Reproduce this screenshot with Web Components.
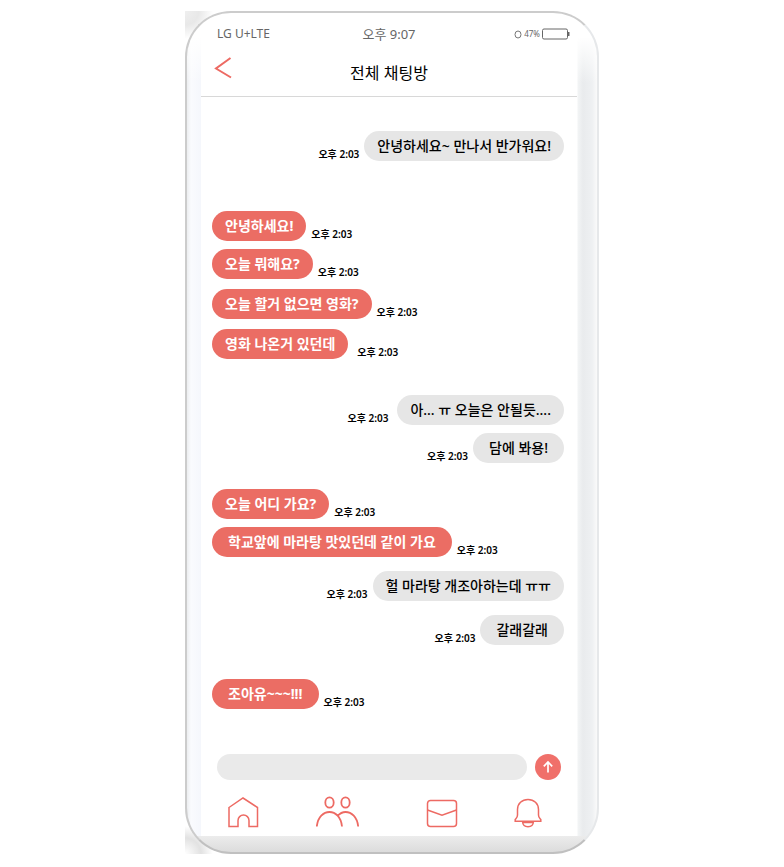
<!DOCTYPE html>
<html lang="ko">
<head>
<meta charset="utf-8">
<meta name="viewport" content="width=device-width, initial-scale=1">
<title>전체 채팅방</title>
<style>
body { margin: 0; padding: 11px 0 13px; background: #fff; color: #000; font-family: "Noto Sans", "Noto Sans CJK KR", sans-serif; }
</style>
</head>
<body>
<phone-frame>
  <status-bar slot="top" carrier="LG U+LTE" time="오후 9:07" battery="47%"></status-bar>
  <room-header slot="top">전체 채팅방</room-header>
  <message-list>
    <chat-message side="sent" time="오후 2:03">안녕하세요~ 만나서 반가워요!</chat-message>
    <chat-message space="break" time="오후 2:03">안녕하세요!</chat-message>
    <chat-message time="오후 2:03">오늘 뭐해요?</chat-message>
    <chat-message space="line" time="오후 2:03">오늘 할거 없으면 영화?</chat-message>
    <chat-message space="line" apart time="오후 2:03">영화 나온거 있던데</chat-message>
    <chat-message side="sent" space="turn" apart time="오후 2:03">아... ㅠ 오늘은 안될듯....</chat-message>
    <chat-message side="sent" roomy time="오후 2:03">담에 봐용!</chat-message>
    <chat-message space="reply" time="오후 2:03">오늘 어디 가요?</chat-message>
    <chat-message roomy time="오후 2:03">학교앞에 마라탕 맛있던데 같이 가요</chat-message>
    <chat-message side="sent" space="near" time="오후 2:03">헐 마라탕 개조아하는데 ㅠㅠ</chat-message>
    <chat-message side="sent" space="near" roomy time="오후 2:03">갈래갈래</chat-message>
    <chat-message space="last" roomy time="오후 2:03">조아유~~~!!!</chat-message>
  </message-list>
  <message-composer slot="bottom"></message-composer>
  <tab-bar slot="bottom"></tab-bar>
</phone-frame>

<script>
const define = (name, markup, setup) => {
  const template = document.createElement('template');
  template.innerHTML = markup;
  customElements.define(name, class extends HTMLElement {
    constructor() {
      super();
      this.attachShadow({ mode: 'open' }).append(template.content.cloneNode(true));
    }
    connectedCallback() { if (setup) setup(this, this.shadowRoot); }
  });
};

define('phone-frame', `
<style>
:host { display: block; box-sizing: border-box; width: 100%; max-width: 414px; margin: 0 auto;
  background:
    radial-gradient(circle at 0 0, #efefef 0, #e8e8e8 14px, #fff 28px) 0 0 / 40px 40px no-repeat,
    radial-gradient(circle at 0 100%, #fff 0, #e2e2e2 16px, #fff 28px) 0 100% / 40px 40px no-repeat,
    #fff; }
.case { box-sizing: border-box; padding: 0 20px 16px 14px; border: 2px solid #ccc; border-right-color: #e6e8ea; border-bottom-color: #c0c0c0; border-radius: 46px;
  background:
    linear-gradient(#fff 0, #fff 24px, transparent) 0 0 / 100% 70px no-repeat,
    linear-gradient(#ececec, #dcdcdc) 0 100% / 100% 16px no-repeat,
    linear-gradient(90deg, #eceef0 0, #fafbfe 4px, #f5f7fc 14px, #fff 14px, #fff calc(100% - 20px), #f2f4f5 calc(100% - 19px), #e9ebed calc(100% - 14px), #eef0f2 calc(100% - 5px), #fafafa 100%); }
.screen { display: flex; flex-direction: column; }
</style>
<div class="case"><div class="screen"><slot name="top"></slot><slot></slot><slot name="bottom"></slot></div></div>`);

define('status-bar', `
<style>
:host { display: grid; grid-template-columns: 1fr auto 1fr; align-items: center; height: 42px; padding: 0 7px; color: #666; font-size: 12px; line-height: 18px; }
.carrier { padding-left: 9px; }
.time { font-size: 13px; }
.power { display: flex; align-items: center; justify-content: flex-end; gap: 2px; font-size: 8px; }
svg { display: block; }
</style>
<span class="carrier"></span><span class="time"></span>
<span class="power">
<svg width="8" height="9" viewBox="0 0 8 9" fill="none" stroke="#777"><ellipse cx="4" cy="4.5" rx="3" ry="3.5"/></svg>
<span class="level"></span>
<svg width="28" height="12" viewBox="0 0 28 12"><rect x=".5" y="1" width="25" height="10" rx="1.5" fill="none" stroke="#666"/><path d="M26 4h1.5v4H26z" fill="#666"/></svg>
</span>`, (el, root) => {
  root.querySelector('.carrier').textContent = el.getAttribute('carrier');
  root.querySelector('.time').textContent = el.getAttribute('time');
  root.querySelector('.level').textContent = el.getAttribute('battery');
});

define('room-header', `
<style>
:host { display: grid; grid-template-columns: 1fr auto 1fr; height: 41px; border-bottom: 1px solid #d8d8d8; }
button { justify-self: start; align-self: start; margin: 0 0 0 13px; padding: 0; border: 0; background: none; cursor: pointer; }
svg { display: block; }
h1 { margin: 0; padding-top: 6px; font-size: 16px; line-height: 24px; font-weight: 400; }
</style>
<button type="button" aria-label="뒤로"><svg width="20" height="24" viewBox="0 0 20 24" fill="none" stroke="#ed6a63" stroke-width="2"><path d="M16.500 3 2 13.500 17 22.500"/></svg></button>
<h1><slot></slot></h1>`);

define('message-list', `
<style>
:host { display: flex; flex-direction: column; padding: 34px 13px 45px 11px; }
</style>
<slot></slot>`);

define('chat-message', `
<style>
:host { display: flex; align-items: flex-end; gap: 5px; margin-top: 8px; }
:host(:first-child) { margin-top: 0; }
:host([space="line"]) { margin-top: 10px; }
:host([space="near"]) { margin-top: 14px; }
:host([space="reply"]) { margin-top: 26px; }
:host([space="last"]) { margin-top: 34px; }
:host([space="turn"]) { margin-top: 36px; }
:host([space="break"]) { margin-top: 50px; }
:host([apart]) { gap: 9px; }
:host([side="sent"]) { flex-direction: row-reverse; }
p { margin: 0; padding: 4px 13px; border-radius: 15px; background: #eb6d64; color: #fff; font-size: 14px; line-height: 22px; font-weight: 700; }
:host([side="sent"]) p { background: #e6e6e6; color: #000; font-weight: 500; }
:host([roomy]) p { padding-inline: 16px; }
time { flex: none; font-size: 10px; line-height: 14px; font-weight: 600; }
</style>
<p><slot></slot></p><time></time>`, (el, root) => {
  root.querySelector('time').textContent = el.getAttribute('time');
});

define('message-composer', `
<style>
:host { display: flex; align-items: center; gap: 8px; padding: 0 16px; }
input { flex: 1; min-width: 0; box-sizing: border-box; height: 26px; margin: 0; padding: 0 13px; border: 0; border-radius: 13px; background: #eaeaea; font: inherit; font-size: 14px; }
button { flex: none; width: 26px; height: 26px; padding: 0; border: 0; border-radius: 50%; background: #f0706a; cursor: pointer; }
svg { display: block; }
</style>
<input type="text" aria-label="메시지">
<button type="button" aria-label="보내기"><svg width="26" height="26" viewBox="0 0 26 26" fill="none" stroke="#fff" stroke-width="1.700"><path d="M13 18.500V8M8.800 12.300 13 8l4.200 4.300"/></svg></button>`);

define('tab-bar', `
<style>
:host { display: block; padding: 16px 34px 7px 24px; }
nav { display: flex; justify-content: space-between; align-items: center; }
a { display: block; }
.friends { padding-right: 12px; }
svg { display: block; fill: none; stroke: #ed6a63; stroke-width: 1.500; }
</style>
<nav aria-label="메뉴">
<a href="#home" aria-label="홈"><svg width="36" height="33" viewBox="0 0 36 33"><path d="M4 11.500 18 2l14.500 9.500V30.500h-8.500v-6a5.500 5.500 0 0 0-11 0v6H4z"/></svg></a>
<a class="friends" href="#friends" aria-label="친구"><svg width="44" height="33" viewBox="0 0 44 33" stroke-linecap="butt"><g stroke-width="1.800"><ellipse cx="13.500" cy="6.500" rx="4.200" ry="5.200"/><ellipse cx="29.500" cy="6.500" rx="4.200" ry="5.200"/><path d="M.8 30.500C1.800 21 7.500 16 13.500 16S25 21 26 30.500M21.500 20c2.500-2.700 5-4 8-4 6 0 11.700 5 12.700 14.500"/></g></svg></a>
<a href="#mail" aria-label="메일"><svg width="32" height="33" viewBox="0 0 32 33"><rect x="1.500" y="4.500" width="29" height="26" rx="3"/><path d="M1.500 14 16 19.300l14.500-5.300"/></svg></a>
<a href="#alerts" aria-label="알림"><svg width="30" height="33" viewBox="0 0 30 33"><path d="M4.500 19V13.500C4.500 7.500 9 3.500 15 3.500S25.500 7.500 25.500 13.500V19c0 2.500 1 3 2.300 4.500v1.700H2.200v-1.700C3.500 22 4.500 21.500 4.500 19zM9.500 25.500c.3 3.500 2.700 5.300 5.500 5.300s5.200-1.800 5.500-5.300M9.500 26.500h11"/></svg></a>
</nav>`);
</script>
</body>
</html>
